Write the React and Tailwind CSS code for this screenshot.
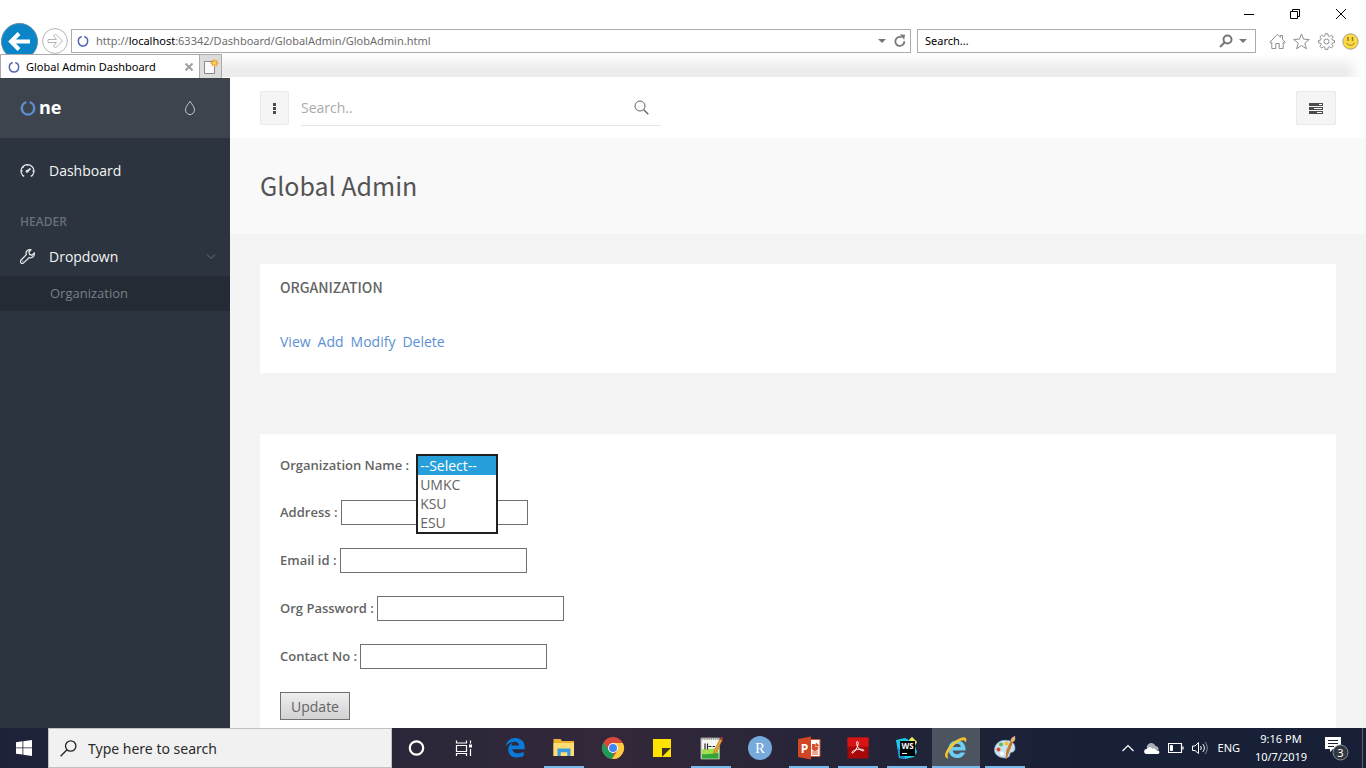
import React from "react";

const seg = "font-['Noto_Sans',sans-serif]";
const BLUE = "#5c90d2";

function Ring({ className, color = "#5566b0", w = 2 }) {
  return (
    <svg viewBox="0 0 16 16" className={className} fill="none" stroke={color} strokeWidth={w} aria-hidden="true">
      <path d="M6.3 2.1A6.4 6.4 0 0 0 8 14.6A6.4 6.4 0 0 0 9.7 2.1" />
    </svg>
  );
}

function Caret() {
  return (
    <svg viewBox="0 0 8 4" className="h-1 w-2 shrink-0" fill="#777" aria-hidden="true">
      <path d="M0 0h8L4 4z" />
    </svg>
  );
}

function TitleBar() {
  return (
    <div className="flex h-7 items-center justify-end gap-9 pr-5">
      <button aria-label="Minimize" className="flex size-2.5 items-center">
        <svg viewBox="0 0 10 10" className="size-2.5 overflow-visible" stroke="#000"><path d="M0 5.5h10" /></svg>
      </button>
      <button aria-label="Restore" className="size-2.5">
        <svg viewBox="0 0 10 10" className="size-2.5 overflow-visible" fill="none" stroke="#000"><path d="M.5 2.5h7v7h-7zM2.5 2V.5h7v7H8" /></svg>
      </button>
      <button aria-label="Close" className="size-2.5">
        <svg viewBox="0 0 10 10" className="size-2.5 overflow-visible" stroke="#000"><path d="M0 0l10 10M10 0L0 10" /></svg>
      </button>
    </div>
  );
}

function AddressBar() {
  return (
    <div className="flex h-[26px] items-center pr-[7px] pl-px">
      <button aria-label="Back" className="relative z-0 size-[37px] shrink-0">
        <svg viewBox="0 0 37 37" className="size-[37px]">
          <circle cx="18.5" cy="18.5" r="18" fill="#0a86c8" stroke="#5e88a3" />
          <path d="M29 18.500H11M18 10.500l-8 8 8 8" fill="none" stroke="#fff" strokeWidth="4" />
        </svg>
      </button>
      <button aria-label="Forward" className="ml-1 size-[26px] shrink-0">
        <svg viewBox="0 0 26 26" className="size-[26px]" fill="none" stroke="#b4b4b4">
          <circle cx="13" cy="13" r="12.400" fill="#fff" />
          <path d="M6 11.500h8.500L11.500 8l2-2L20.500 13l-7 7-2-2 3-3.500H6z" />
        </svg>
      </button>
      <div className="ml-[3px] flex h-6 min-w-0 flex-1 items-center border border-[#ababab] bg-white pr-1 pl-[5px]">
        <Ring className="size-3 shrink-0" />
        <p className="ml-[7px] flex-1 truncate text-[11px] leading-5 text-[#6d6d6d]">
          http://<span className="text-black">localhost</span>:63342/Dashboard/GlobalAdmin/GlobAdmin.html
        </p>
        <Caret />
        <button aria-label="Refresh" className="ml-2 size-3">
          <svg viewBox="0 0 12 12" className="size-3 overflow-visible" fill="none" stroke="#777" strokeWidth="1.800">
            <path d="M10.300 6.200a4.500 4.500 0 1 1-2.600-3.900" /><path d="M5.800-.6l5.200.4-.8 5z" fill="#777" stroke="none" />
          </svg>
        </button>
      </div>
      <div className="ml-1.5 flex h-6 w-[339px] shrink-0 items-center border border-[#ababab] bg-white pr-2 pl-[7px]">
        <input aria-label="Search the web" placeholder="Search..." className="min-w-0 flex-1 text-[11px] leading-5 outline-none placeholder:text-black" />
        <svg viewBox="0 0 14 14" className="mr-1.5 size-3.5" fill="none" stroke="#777" strokeWidth="2" aria-hidden="true">
          <circle cx="8.500" cy="5.500" r="4" /><path d="M5.500 8.500L1 13" />
        </svg>
        <Caret />
      </div>
      <div className="ml-[13px] flex w-[90px] shrink-0 items-center justify-between">
        <button aria-label="Home">
          <svg viewBox="0 0 17 17" className="size-[17px]" fill="none" stroke="#8f8f8f">
            <path d="M.8 9.300L8.500 1.200l3 3.100V2.500h2v3.800l2.700 3-1 .9-1-1v6.300h-4v-5h-3.400v5h-4V9.200l-1 1z" />
          </svg>
        </button>
        <button aria-label="Favorites">
          <svg viewBox="0 0 17 17" className="size-[17px]" fill="none" stroke="#8f8f8f">
            <path d="M8.500.9l2.100 5.300 5.700.3-4.500 3.600 1.600 5.700-4.900-3.300-4.900 3.300 1.600-5.700L.7 6.500l5.700-.3z" />
          </svg>
        </button>
        <button aria-label="Tools">
          <svg viewBox="0 0 17 17" className="size-[17px]" fill="none" stroke="#8f8f8f">
            <circle cx="8.500" cy="8.500" r="2.500" />
            <path d="M7.200.7h2.600l.4 2.300 1.300.5 1.900-1.300 1.700 1.700-1.300 1.900.5 1.300 2.200.4v2.200l-2.200.4-.5 1.300 1.300 1.900-1.700 1.700-1.900-1.300-1.300.5-.4 2.200H7.200l-.4-2.200-1.300-.5-1.900 1.300-1.700-1.700 1.300-1.900-.5-1.300-2.200-.4V7.500l2.200-.4.5-1.300-1.300-1.900 1.700-1.700 1.900 1.300L6.800 3z" />
          </svg>
        </button>
        <button aria-label="Feedback">
          <svg viewBox="0 0 17 17" className="size-[17px]">
            <circle cx="8.500" cy="8.500" r="7.700" fill="#fddb3f" stroke="#a5a08a" />
            <path d="M6 4v4M10.500 4v4" stroke="#8b7a35" strokeWidth="1.500" /><path d="M4.500 9.800c1.500 3.300 6.500 3.300 8 0" fill="none" stroke="#8b7a35" />
          </svg>
        </button>
      </div>
    </div>
  );
}

function TabStrip() {
  return (
    <div className="relative z-10 flex h-6 bg-white">
      <div className="flex w-[200px] items-center border border-b-0 border-[#ababab] bg-white pr-1.5 pl-[7px]">
        <Ring className="size-3" />
        <span className="ml-1.5 flex-1 truncate text-[11px] leading-5 text-black">Global Admin Dashboard</span>
        <button aria-label="Close tab" className="size-2">
          <svg viewBox="0 0 8 8" className="size-2" stroke="#a0a0a0" strokeWidth="2"><path d="M.5.5l7 7M7.500.5l-7 7" /></svg>
        </button>
      </div>
      <button aria-label="New tab" className="flex w-[22px] items-center justify-center border border-b-0 border-l-0 border-[#ababab] bg-[#dcdcdc]">
        <svg viewBox="0 0 16 16" className="size-4">
          <path d="M1.500 2.500h10v12h-10z" fill="#fafafa" stroke="#8a8a8a" />
          <path d="M11.500 0v8M7.500 4h8M8.700 1.200l5.600 5.600M14.300 1.200L8.700 6.800" stroke="#e9a52d" strokeWidth="1.300" />
          <circle cx="11.500" cy="4" r="1.500" fill="#ffd66b" />
        </svg>
      </button>
      <div className="mr-1 mb-px flex-1 bg-linear-to-b from-white to-[#ececec] to-70% [mask-image:linear-gradient(to_right,black_calc(100%_-_16px),transparent)]" />
    </div>
  );
}

function Sidebar() {
  return (
    <aside className="flex w-[230px] shrink-0 flex-col bg-[#2c343f] text-[14px]">
      <div className="flex h-[60px] items-center bg-[#3e444e] pr-8 pl-5">
        <a href="#home" className="flex flex-1 items-center text-[18px] leading-6 font-bold text-white">
          <Ring className="mr-[3px] size-4" color={BLUE} w={2.4} />
          <span className="pb-0.5">ne</span>
        </a>
        <button aria-label="Color themes" className="w-4">
          <svg viewBox="0 0 16 16" className="size-4" fill="none" stroke="#c4c7cb"><path d="M8 1.300c1.600 2.700 4.500 5.400 4.500 8.600a4.500 4.700 0 0 1-9 0c0-3.200 2.900-5.900 4.500-8.600z" /></svg>
        </button>
      </div>
      <nav className="pt-[15px]">
        <a href="#dashboard" className="flex h-[34px] items-center pl-5 text-[#f4f4f4]">
          <svg viewBox="0 0 15 15" className="mr-3.5 size-[15px]" fill="none" stroke="#e4e6e8" strokeWidth="1.300">
            <path d="M4.200 13.400L2.600 12.400A6.500 6.500 0 1 1 12.400 12.400L10.800 13.400" /><path d="M7 8.500l3.500-3" strokeWidth="1.700" /><circle cx="7.100" cy="8.300" r=".9" />
            <path d="M7.500 1v1.700M2.800 3.500l1 .9M1 8h1.500M12.500 8H14" />
          </svg>
          Dashboard
        </a>
        <h2 className="mt-5 flex h-[30px] items-center pl-5 text-[12px] font-semibold text-[#67707a]">HEADER</h2>
        <button className="flex h-[39px] w-full items-center pr-3.5 pl-5 text-[#f4f4f4]">
          <svg viewBox="0 0 15 15" className="mr-3.5 size-[15px]" fill="none" stroke="#e4e6e8" strokeWidth="1.300">
            <path d="M10.900.8a3.700 3.700 0 0 0-4.600 4.800L.9 11.200a1.700 1.700 0 0 0 2.700 2.700L9.300 8.500a3.700 3.700 0 0 0 4.900-4.400L12 6.200l-2.400-.8-.7-2.400z" /><path d="M2.500 12.500l.5-.5" />
          </svg>
          <span className="flex-1 text-left">Dropdown</span>
          <svg viewBox="0 0 10 10" className="size-2.5" fill="none" stroke="#6b737d"><path d="M1 2.500l4 4 4-4" /></svg>
        </button>
        <a href="#organization" className="flex h-[35px] items-center bg-[#242b34] pl-[50px] text-[13px] text-[#7a8088]">Organization</a>
      </nav>
    </aside>
  );
}

function TopBar() {
  return (
    <header className="flex h-[60px] shrink-0 items-center bg-white px-[30px]">
      <button aria-label="Toggle sidebar" className="flex h-[34px] w-[29px] items-center justify-center rounded-xs border border-[#e9e9e9] bg-[#f5f5f5]">
        <svg viewBox="0 0 3 11" className="h-[11px] w-[3px]" fill="#4c4c4c"><path d="M0 0h3v3H0zM0 4h3v3H0zM0 8h3v3H0z" /></svg>
      </button>
      <div className="mb-3 ml-3 flex h-[34px] w-[360px] items-center self-end border-b border-[#e6e6e6] pr-3 pb-0.5">
        <input aria-label="Search" placeholder="Search.." className="min-w-0 flex-1 text-[14px] outline-none placeholder:text-[#aaa]" />
        <button aria-label="Submit search" className="size-[15px]">
          <svg viewBox="0 0 15 15" className="size-[15px]" fill="none" stroke="#646464"><circle cx="6" cy="6" r="5" /><path d="M9.700 9.700l4.600 4.600" strokeWidth="1.400" /></svg>
        </button>
      </div>
      <button aria-label="Toggle panel" className="ml-auto flex h-[34px] w-10 items-center justify-center rounded-xs border border-[#e9e9e9] bg-[#f5f5f5]">
        <svg viewBox="0 0 14 11" className="h-[11px] w-3.5"><path d="M0 0h14v3H0zM0 4h14v3H0zM0 8h14v3H0z" fill="#4c4c4c" /><path d="M10 1.500h3M5 5.500h8M8 9.500h5" stroke="#fff" /></svg>
      </button>
    </header>
  );
}

function Field({ id, label, type = "text" }) {
  return (
    <div className="flex h-[25px] items-center">
      <label htmlFor={id} className="mr-[3px] text-[13px] font-semibold whitespace-nowrap">{label} :</label>
      <input id={id} type={type} className="h-[25px] w-[187px] border border-[#707070] bg-white px-1" />
    </div>
  );
}

function OrganizationForm() {
  return (
    <form className="mt-[61px] flex flex-col gap-[23px] bg-white px-5 pt-5 pb-10" onSubmit={(e) => e.preventDefault()}>
      <div className="flex h-[23px] items-center">
        <label htmlFor="org" className="mr-[7px] text-[13px] font-semibold whitespace-nowrap">Organization Name :</label>
        <div className="relative w-[82px] self-start">
          <select id="org" size="4" defaultValue="none" className="absolute top-0 left-0 z-10 h-20 w-[82px] overflow-hidden border-2 border-[#1f1f1f] bg-white p-0 text-[14px] outline-none">
            <option value="none" className="h-[19px] min-h-0 bg-[#269fdb] px-0.5 py-0 leading-[19px] text-white checked:bg-[linear-gradient(#269fdb,#269fdb)]">--Select--</option>
            <option className="h-[19px] min-h-0 px-0.5 py-0 leading-[19px]">UMKC</option>
            <option className="h-[19px] min-h-0 px-0.5 py-0 leading-[19px]">KSU</option>
            <option className="h-[19px] min-h-0 px-0.5 py-0 leading-[19px]">ESU</option>
          </select>
        </div>
      </div>
      <Field id="address" label="Address" />
      <Field id="email" label="Email id" type="email" />
      <Field id="password" label="Org Password" type="password" />
      <Field id="contact" label="Contact No" type="tel" />
      <button className="h-7 w-[70px] border border-[#707070] bg-linear-to-b from-[#efefef] to-[#d2d2d2] text-[14px]">Update</button>
    </form>
  );
}

function Main() {
  return (
    <main className="flex min-w-0 flex-1 flex-col bg-[#f4f4f4] text-[#646464]">
      <TopBar />
      <div className="flex h-24 shrink-0 items-center bg-[#f9f9f9] px-[30px] pb-0.5">
        <h1 className="font-['Noto_Sans_CJK_SC',sans-serif] text-[25px] leading-8 text-[#545454]">Global Admin</h1>
      </div>
      <div className="px-[30px] pt-[30px]">
        <section className="bg-white px-5 pt-[13px] pb-[21px]">
          <h2 className="font-['Noto_Sans_CJK_SC',sans-serif] text-[14px] leading-5 font-medium">ORGANIZATION</h2>
          <div className="mt-[35px] flex gap-[7px] text-[14px] leading-5 text-[#5c90d2]">
            <a href="#view">View</a>
            <a href="#add">Add</a>
            <a href="#modify">Modify</a>
            <a href="#delete">Delete</a>
          </div>
        </section>
        <OrganizationForm />
      </div>
    </main>
  );
}

function TaskApp({ label, line, active, children }) {
  return (
    <button aria-label={label} className={active ? "flex h-10 w-12 flex-col items-center bg-[#4b545f]" : "flex h-10 w-12 flex-col items-center"}>
      <span className="flex flex-1 items-center pt-0.5">
        <svg viewBox="0 0 24 24" className="size-6">{children}</svg>
      </span>
      <span className={line ? (active ? "h-0.5 w-full bg-[#76b9ed]" : "h-0.5 w-10 bg-[#76b9ed]") : "h-0.5 w-10"} />
    </button>
  );
}

function Taskbar() {
  return (
    <footer className={`flex h-10 shrink-0 items-center bg-linear-to-r from-[#1c2238] from-0% via-[#33283a] via-45% to-[#172036] to-80% text-white ${seg}`}>
      <button aria-label="Start" className="flex h-10 w-12 items-center justify-center">
        <svg viewBox="0 0 16 16" className="size-4" fill="#fff"><path d="M0 2.200l6.500-.9v6.200H0zM7.300 1.200L16 0v7.500H7.300zM0 8.300h6.500v6.300L0 13.700zM7.300 8.300H16V16l-8.700-1.200z" /></svg>
      </button>
      <div className="flex h-10 w-[344px] items-center border border-[#c0c0c0] bg-[#f1f1f1] pl-[11px]">
        <svg viewBox="0 0 17 17" className="mr-[11px] size-[17px]" fill="none" stroke="#222" strokeWidth="1.300" aria-hidden="true"><circle cx="10.700" cy="6" r="5.200" /><path d="M7 9.800L.6 16.300" /></svg>
        <input aria-label="Type here to search" placeholder="Type here to search" className="min-w-0 flex-1 text-[14px] outline-none placeholder:text-[#2b2b2b]" />
      </div>
      <div className="ml-px flex gap-px">
        <TaskApp label="Cortana"><circle cx="11.500" cy="12" r="6.700" fill="none" stroke="#fff" strokeWidth="2.200" /></TaskApp>
        <TaskApp label="Task View"><path d="M2.500 4.500V7h10V4.500M2.500 9.500h10v6h-10zM2.500 20v-2.500h10V20M16.500 4.500v3M16.500 13v7" fill="none" stroke="#fff" strokeWidth="1.200" /><path d="M15 8.500h3v3h-3z" fill="#fff" /></TaskApp>
        <TaskApp label="Edge"><path d="M2 11C3 5 7 2 12 2c6 0 10 4 10 9.500V14H9c.2 3 3 4.400 6 4.400 2.500 0 4.300-.6 6-1.600v4.300c-2 1.100-4.300 1.700-7 1.700-6 0-9.500-3.500-9.500-8.300 0-3.400 2-6.200 5-7.600-.8.800-1.300 2-1.400 3.200h7.800c0-2.600-1.500-4-4.400-4C7 6.100 4 8 2 11z" fill="#0a7ad8" transform="translate(1 0) scale(.94)" /></TaskApp>
        <TaskApp label="File Explorer" line><path d="M1.500 3h7l1.500 2h12v15h-20.500z" fill="#eeb12e" /><path d="M1.500 7h20.500v13h-20.500z" fill="#ffdc74" /><path d="M5.500 20v-7.500h13V20h-3.200v-3.800H8.700V20z" fill="#3a9be0" /></TaskApp>
        <TaskApp label="Chrome">
          <circle cx="12" cy="12" r="11" fill="#d9483b" />
          <path d="M2.500 6.500L8 14.500l5 3.500-2 5A11 11 0 0 1 2.500 6.500z" fill="#1c9c59" /><path d="M12 7h9.800A11 11 0 0 1 11 23l5.500-8.500z" fill="#fccc3f" />
          <circle cx="12" cy="12" r="5" fill="#fff" /><circle cx="12" cy="12" r="4" fill="#4285f4" />
        </TaskApp>
        <TaskApp label="Sticky Notes"><path d="M3 3h18v9l-9 9H3z" fill="#ffe400" /><path d="M12 12h9l-9 9z" fill="#3a3420" /><path d="M21 12v9h-9z" fill="#ffe400" /></TaskApp>
        <TaskApp label="Notepad++" line>
          <path d="M2 2h18.500v21H2z" fill="#f4f7f0" stroke="#9a9a9a" /><path d="M3 13c6 1 10-1 16.500-1v10.500H3z" fill="#a4e04e" /><path d="M3 18c6 1 11-1 16.500-1v5.500H3z" fill="#2fa53a" />
          <path d="M3 3h17" stroke="#8a8a8a" strokeWidth="1.600" strokeDasharray="1.200 1" /><path d="M6 7.500v6M8.500 7.500v6M9.500 10.500h3M13.500 10.500H16" stroke="#2b2b2b" strokeWidth="1.200" />
          <path d="M14.500 18.500l.8-4L21 3l2.300 1.100L17.500 16z" fill="#e9a82e" stroke="#a8641e" strokeWidth=".6" /><path d="M21 3l1-2.300 2.300 1.200-1 2.200z" fill="#b53a3a" />
        </TaskApp>
        <TaskApp label="RStudio"><circle cx="12" cy="12" r="12" fill="#75aadb" /><text x="12" y="17" textAnchor="middle" fontSize="15" fill="#fff" fontFamily="Liberation Serif, serif">R</text></TaskApp>
        <TaskApp label="PowerPoint" line>
          <path d="M12 3.500h11v17H12z" fill="#fff" stroke="#d35230" /><path d="M15 8.500h3v3h3a3 3 0 1 1-6 0M19 7.500a3 3 0 0 1 2.500 2.500H19zM15 16h6M15 18h6" fill="#d35230" stroke="#d35230" />
          <path d="M1 3l13-2.500v23L1 21z" fill="#d24625" /><text x="7.500" y="16.500" textAnchor="middle" fontSize="12" fontWeight="700" fill="#fff" fontFamily="Open Sans, sans-serif">P</text>
        </TaskApp>
        <TaskApp label="Acrobat Reader" line>
          <path d="M1.500 1.500h21v21h-21z" fill="#a80808" /><path d="M1.500 1.500h21v9h-21z" fill="#d81414" />
          <path d="M11.300 5.500c1.600 0 .9 3.500-.4 6.200-1.300 2.800-3.200 5.300-4.500 5.300-1.700 0 .2-2.300 4-3.300 3.200-.8 7.400-.7 7.400.7 0 1.300-3.900 0-5.600-2.600-1.500-2.300-2.200-6.300-.9-6.300z" fill="none" stroke="#fff" />
        </TaskApp>
        <TaskApp label="WebStorm" line>
          <path d="M1 4l9-2 4 2 3-3 5 5-2 4 2 6-3 5-9 2-6-1z" fill="#21c8e8" /><path d="M14 4l3-3 5 5-2 3z" fill="#f5e642" /><path d="M2 10l3 12 6 1z" fill="#1b8bd0" />
          <path d="M5 5h15v15H5z" fill="#000" /><text x="12.500" y="13" textAnchor="middle" fontSize="8" fontWeight="700" fill="#fff" fontFamily="Open Sans, sans-serif">WS</text><path d="M7 17.500h5" stroke="#fff" />
        </TaskApp>
        <TaskApp label="Internet Explorer" line active>
          <path d="M13 4.500c-5 0-8.500 3.500-8.500 8.500s3.500 9 8.500 9c4 0 7-2 8-5.500h-4.500c-.8 1.200-2 1.800-3.500 1.800-2.400 0-4-1.500-4.200-3.800H21.500c.5-6-3-10-8.500-10zM9 11c.5-2 2-3.200 4-3.200s3.500 1.200 3.800 3.200z" fill="#6fcdf3" />
          <path d="M4 22C-1 22 2 13 9 7c6-5 13-7 13-3.500 0 .8-.2 1.500-.6 2.500C21.200 2 16 4 10.500 8.500 4.500 14 1.500 20 4 22z" fill="#f7c92c" stroke="#f7c92c" strokeWidth=".8" />
        </TaskApp>
        <TaskApp label="Paint" line>
          <path d="M10 4.500c7-1 12 2 12 7.500 0 4-2.500 4-4 4.500-2 .6 0 4-3.500 5C9 23 1.500 20 1.500 14c0-5 4-9 8.500-9.500z" fill="#c9e2f3" stroke="#80aecb" strokeWidth=".7" />
          <circle cx="8" cy="8.500" r="2" fill="#63b94a" /><circle cx="5.500" cy="13.500" r="2" fill="#da4932" /><circle cx="13.500" cy="7.500" r="2" fill="#f1c12d" /><circle cx="9" cy="17.500" r="2" fill="#fff" />
          <path d="M20 5l-4 10-3 8 1-9 4-9z" fill="#c47a2c" stroke="#c47a2c" /><path d="M17.500 5c0-3 2-4 4.500-5 .5 3 .5 5-2 6z" fill="#e4b27b" />
        </TaskApp>
      </div>
      <div className="ml-auto flex h-10 items-center text-[12px]">
        <svg viewBox="0 0 12 8" className="h-2 w-3" fill="none" stroke="#fff" strokeWidth="1.200"><path d="M.5 7L6 1.500 11.500 7" /></svg>
        <svg viewBox="0 0 16 11" className="ml-2.5 h-[11px] w-4"><path d="M3 6a4.500 4.500 0 0 1 8.500-3 3.500 3.500 0 0 1 3 4z" fill="#a9adb5" /><path d="M2.500 11a2.500 2.500 0 0 1 .3-5c1-2 4-2.500 5.500-.5C12 5 12 7.500 14 7.500a1.800 1.800 0 0 1 0 3.500z" fill="#fff" /></svg>
        <svg viewBox="0 0 16 10" className="ml-2 h-2.5 w-4" fill="none" stroke="#fff"><path d="M.5.5h13v9H.5zM15 3.500v3" strokeWidth="1.200" /><path d="M2.500 2.500h2v5h-2z" fill="#fff" /></svg>
        <svg viewBox="0 0 16 14" className="ml-2 h-3.5 w-4" fill="none" stroke="#fff"><path d="M.5 5h2.500l3.500-3.500v11L3 9.500H.5zM8.500 5c1 1.200 1 2.800 0 4M10.700 3c2.200 2.400 2.200 5.600 0 8" /><path d="M13 1c3 3.500 3 8.500 0 12" stroke="#8b90a0" /></svg>
        <span className="ml-2.5 text-[11px]">ENG</span>
        <div className="ml-3 w-[58px] text-center text-[11px] leading-[18px] whitespace-nowrap">
          <div>9:16 PM</div>
          <div>10/7/2019</div>
        </div>
        <button aria-label="3 notifications" className="ml-3.5">
          <svg viewBox="0 0 26 26" className="size-[26px]">
            <path d="M1 2h16v12H9l-3 3v-3H1z" fill="#fff" /><path d="M4 5.500h10M4 8.500h10M4 11.500h6" stroke="#1a2036" />
            <circle cx="16.500" cy="17.500" r="7.500" fill="#33373f" stroke="#8a8d94" /><text x="16.500" y="21.500" textAnchor="middle" fontSize="11" fill="#fff" fontFamily="Noto Sans, sans-serif">3</text>
          </svg>
        </button>
        <span className="ml-3 h-10 w-1 border-l border-[#5a6070]" />
      </div>
    </footer>
  );
}

export default function App() {
  return (
    <div className="flex h-screen flex-col overflow-hidden bg-white font-['Open_Sans',sans-serif]">
      <div className={`shrink-0 ${seg}`}>
        <TitleBar />
        <AddressBar />
        <TabStrip />
      </div>
      <div className="flex min-h-0 flex-1 overflow-hidden">
        <Sidebar />
        <Main />
      </div>
      <Taskbar />
    </div>
  );
}
